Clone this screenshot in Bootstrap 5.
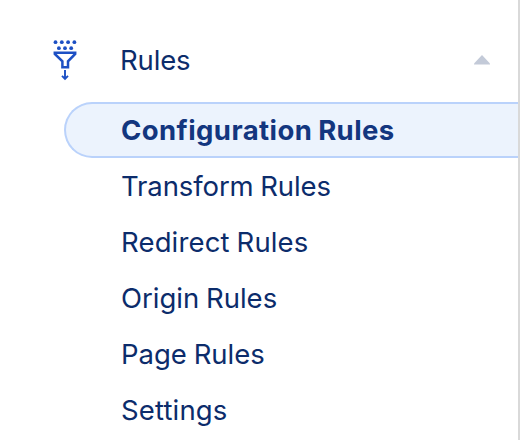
<!DOCTYPE html>
<html lang="en">
<head>
<meta charset="utf-8">
<meta name="viewport" content="width=device-width, initial-scale=1">
<title>Rules</title>
<link href="https://cdn.jsdelivr.net/npm/bootstrap@5.3.0/dist/css/bootstrap.min.css" rel="stylesheet">
<style>
body { font-family: Inter, "Liberation Sans", sans-serif; font-size: 27.5px; line-height: 42px; color: #0c2c6b; background: #fff; }
.sidebar { height: 440px; border-right: 2px solid #d9d9d9; padding-top: 32px; }
.section-toggle { height: 56px; padding-left: 50px; padding-right: 28px; margin-bottom: 14px; color: inherit; }
.section-label { margin-left: 40px; letter-spacing: -.15px; padding-bottom: 1px; }
.sub-nav { margin-left: 64px; }
.sub-nav .nav-link { height: 56px; padding: 5px 0 5px 55px; border: 2px solid transparent; border-right: 0; color: inherit; letter-spacing: 0; word-spacing: -1px; }
.sub-nav .nav-link.active { color: #13367f; background: #ecf3fd; border-color: #bad2fb; border-radius: 28px 0 0 28px; font-weight: 700; letter-spacing: .42px; }
.sub-nav .tracking-tight { letter-spacing: -.1px; }
.sub-nav .tracking-wide { letter-spacing: .15px; }
</style>
<script src="https://cdn.jsdelivr.net/npm/bootstrap@5.3.0/dist/js/bootstrap.bundle.min.js"></script>
</head>
<body class="overflow-hidden">
<nav class="sidebar overflow-hidden" aria-label="Rules">
  <a class="section-toggle d-flex align-items-center text-decoration-none" href="#rules-menu" role="button" data-bs-toggle="collapse" aria-expanded="true">
    <svg width="30" height="42" viewBox="0 0 30 42" fill="none" stroke="#1d50c4" stroke-width="2.5" aria-hidden="true">
      <g fill="#1d50c4" stroke="none">
        <circle cx="5.5" cy="3.2" r="1.9"/><circle cx="11.8" cy="3.2" r="1.9"/><circle cx="18.1" cy="3.2" r="1.9"/><circle cx="24.4" cy="3.2" r="1.9"/>
        <circle cx="8.9" cy="9.2" r="1.9"/><circle cx="15" cy="9.2" r="1.9"/><circle cx="21.2" cy="9.2" r="1.9"/>
      </g>
      <path d="M4.8 13.7H25.2V15L18 22.3V28.3H12.4V22.3L4.8 15Z"/>
      <path d="M15 31V40M12 36.8L15 39.8L18 36.8" stroke-width="1.9"/>
    </svg>
    <span class="section-label flex-grow-1">Rules</span>
    <svg width="16" height="10" viewBox="0 0 16 10" aria-hidden="true"><path d="M8 0L16 8.5V9.5H0V8.5Z" fill="#c3cad8"/></svg>
  </a>
  <div class="collapse show" id="rules-menu">
    <div class="sub-nav nav flex-column flex-nowrap">
      <a class="nav-link active" aria-current="page" href="#">Configuration Rules</a>
      <a class="nav-link tracking-tight" href="#">Transform Rules</a>
      <a class="nav-link tracking-wide" href="#">Redirect Rules</a>
      <a class="nav-link" href="#">Origin Rules</a>
      <a class="nav-link" href="#">Page Rules</a>
      <a class="nav-link tracking-wide" href="#">Settings</a>
    </div>
  </div>
</nav>
</body>
</html>
